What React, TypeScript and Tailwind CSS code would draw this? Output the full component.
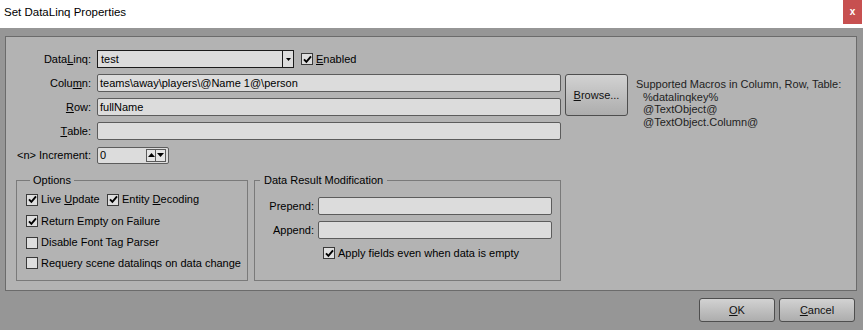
import React from "react";

const CheckMark = () => (
  <svg width="9" height="9" viewBox="0 0 9 9" className="block">
    <path d="M1 4.3 L3.4 6.8 L8 1.4" stroke="#000" strokeWidth="1.9" fill="none" />
  </svg>
);

function Box({ checked }: { checked?: boolean }) {
  return (
    <span className="w-[12px] h-[12px] border border-[#3a3a3a] bg-[#dedede] flex items-center justify-center shrink-0">
      {checked ? <CheckMark /> : null}
    </span>
  );
}

function Check({ checked, children, className = "" }: { checked?: boolean; children: React.ReactNode; className?: string }) {
  return (
    <div className={"flex items-center gap-[3px] " + className}>
      <Box checked={checked} />
      <span className="leading-[13px]">{children}</span>
    </div>
  );
}

function Field({ children, className = "" }: { children?: React.ReactNode; className?: string }) {
  return (
    <div className={"h-[18px] border border-[#5c5c5c] rounded-[2px] bg-[#dcdcdc] flex items-center px-[2px] leading-[13px] " + className}>
      {children}
    </div>
  );
}

const Tri = ({ up }: { up?: boolean }) => (
  <svg width="7" height="4" viewBox="0 0 7 4" className="block">
    {up ? <path d="M0 4 L3.5 0 L7 4 Z" fill="#000" /> : <path d="M0 0 L7 0 L3.5 4 Z" fill="#000" />}
  </svg>
);

function Btn({ children, className = "" }: { children: React.ReactNode; className?: string }) {
  return (
    <div
      className={
        "border border-[#4e4e4e] rounded-[3px] bg-gradient-to-b from-[#d2d2d2] to-[#adadad] flex items-center justify-center text-[#111] " +
        className
      }
    >
      {children}
    </div>
  );
}

export default function App() {
  return (
    <div
      className="w-[863px] h-[330px] bg-[#969696] flex flex-col text-[11px] text-[#000] overflow-hidden"
      style={{ fontFamily: '"Liberation Sans", Arial, sans-serif' }}
    >
      {/* Title bar */}
      <div className="h-[28px] bg-white flex items-start justify-between shrink-0">
        <div className="pl-[4px] pt-[5px] text-[11.5px] leading-[14px] text-[#000]">Set DataLinq Properties</div>
        <div className="w-[19px] h-[24px] bg-[#c75050] mr-[1px] flex items-center justify-center text-white font-bold text-[10px] leading-none">
          x
        </div>
      </div>

      {/* Panel */}
      <div className="ml-[5px] mr-[6px] mt-[8px] h-[255px] border border-[#6b6b6b] bg-[#b3b3b3] flex flex-col pt-[13px] shrink-0">
        <div className="grid grid-cols-[87px_464px_63px_1fr] grid-rows-[18px_18px_18px_18px_18px] gap-x-[4px] gap-y-[6px]">
          {/* Row 1 */}
          <div className="flex items-center justify-end pr-[2px]">
            Data<span className="underline">L</span>inq:
          </div>
          <div className="col-span-3 flex items-center">
            <div className="w-[197px] h-[18px] border border-[#1a1a1a] bg-[#dcdcdc] flex items-center">
              <span className="flex-1 px-[3px] leading-[13px]">test</span>
              <div className="w-[11px] h-full border-l border-[#1a1a1a] flex items-center justify-center">
                <svg width="5" height="3" viewBox="0 0 5 3" className="block">
                  <path d="M0 0 L5 0 L2.5 3 Z" fill="#000" />
                </svg>
              </div>
            </div>
            <Check checked className="ml-[7px]">
              <span className="underline">E</span>nabled
            </Check>
          </div>

          {/* Row 2 */}
          <div className="flex items-center justify-end pr-[2px]">
            Colu<span className="underline">m</span>n:
          </div>
          <Field>teams\away\players\@Name 1@\person</Field>
          <Btn className="row-span-2">
            <span>
              <span className="underline">B</span>rowse...
            </span>
          </Btn>
          <div className="row-span-4 pl-[4px] pt-[4px] leading-[12.7px] text-[#1e1e1e]">
            <div>Supported Macros in Column, Row, Table:</div>
            <div className="pl-[7px]">%datalinqkey%</div>
            <div className="pl-[7px]">@TextObject@</div>
            <div className="pl-[7px]">@TextObject.Column@</div>
          </div>

          {/* Row 3 */}
          <div className="flex items-center justify-end pr-[2px]">
            <span className="underline">R</span>ow:
          </div>
          <Field>fullName</Field>

          {/* Row 4 */}
          <div className="flex items-center justify-end pr-[2px]">
            <span className="underline">T</span>able:
          </div>
          <Field />
          <div />

          {/* Row 5 */}
          <div className="flex items-center justify-end pr-[2px]">&lt;n&gt; Increment:</div>
          <div className="flex items-center">
            <div className="w-[72px] h-[17px] border border-[#5c5c5c] rounded-[2px] bg-[#dcdcdc] flex items-center">
              <span className="flex-1 px-[2px] leading-[13px]">0</span>
              <div className="flex mr-[2px]">
                <div className="w-[10px] h-[13px] border border-[#5a5a5a] bg-[#e4e4e4] flex items-center justify-center">
                  <Tri up />
                </div>
                <div className="w-[10px] h-[13px] border border-l-0 border-[#5a5a5a] bg-[#e4e4e4] flex items-center justify-center">
                  <Tri />
                </div>
              </div>
            </div>
          </div>
        </div>

        {/* Groups */}
        <div className="flex pl-[10px] mt-[10px] gap-[6px]">
          <fieldset className="w-[232px] h-[107px] border border-[#7a7a7a] pl-[9px] pt-[2px]">
            <legend className="ml-[4px] px-[3px] leading-[13px]">Options</legend>
            <div className="flex flex-col">
              <div className="h-[21px] flex items-center">
                <Check checked className="w-[81px]">
                  Live <span className="underline">U</span>pdate
                </Check>
                <Check checked>
                  Entity <span className="underline">D</span>ecoding
                </Check>
              </div>
              <div className="h-[22px] flex items-center">
                <Check checked>Return Empty on Failure</Check>
              </div>
              <div className="h-[21px] flex items-center">
                <Check>Disable Font Tag Parser</Check>
              </div>
              <div className="h-[20px] flex items-center">
                <Check>Requery scene datalinqs on data change</Check>
              </div>
            </div>
          </fieldset>

          <fieldset className="w-[307px] h-[107px] border border-[#7a7a7a] pt-[10px]">
            <legend className="ml-[5px] px-[4px] leading-[13px]">Data Result Modification</legend>
            <div className="grid grid-cols-[59px_234px] gap-x-[4px] gap-y-[6px]">
              <div className="flex items-center justify-end">Prepend:</div>
              <Field />
              <div className="flex items-center justify-end">Append:</div>
              <Field />
            </div>
            <div className="h-[18px] mt-[5px] pl-[68px] flex items-center">
              <Check checked>Apply fields even when data is empty</Check>
            </div>
          </fieldset>
        </div>
      </div>

      {/* Footer */}
      <div className="flex justify-end gap-[4px] mr-[8px] mt-[7px]">
        <Btn className="w-[76px] h-[24px]">
          <span>
            <span className="underline">O</span>K
          </span>
        </Btn>
        <Btn className="w-[76px] h-[24px]">
          <span>
            <span className="underline">C</span>ancel
          </span>
        </Btn>
      </div>
    </div>
  );
}
